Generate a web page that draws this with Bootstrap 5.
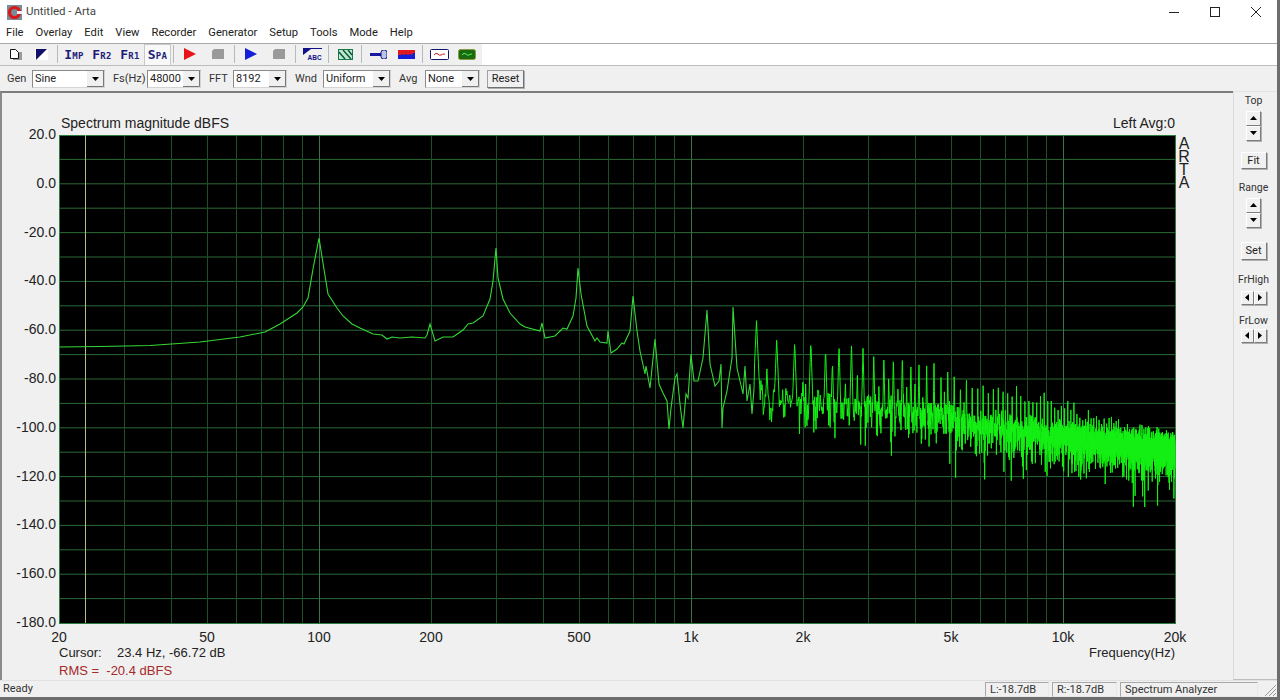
<!DOCTYPE html>
<html lang="en">
<head>
  <meta charset="UTF-8">
  <meta name="viewport" content="width=device-width, initial-scale=1.0">
  <title>Untitled - Arta</title>
  <link href="https://cdn.jsdelivr.net/npm/bootstrap@5.3.0/dist/css/bootstrap.min.css" rel="stylesheet">
  <style>
    html, body {
      height: 700px;
      overflow: hidden;
    }
    body {
      background-color: #6d6d6d;
      font-family: Roboto, "Noto Sans", sans-serif;
      font-size: 11px;
      color: #222;
    }
    .app-window {
      width: 1277px;
      height: 697px;
      background-color: #f0f0f0;
    }
    .title-row {
      height: 24px;
      background-color: #fff;
      padding-left: 7px;
      font-size: 11.5px;
      color: #444;
    }
    .win-btn {
      width: 41px;
      height: 24px;
    }
    .win-btns {
      margin-right: 1px;
    }
    .menu-row {
      height: 20px;
      background-color: #fff;
      font-size: 11.2px;
      padding-left: 6px;
      gap: 12px;
      border-bottom: 1px solid #a8a8a8;
    }
    .tool-row {
      height: 22px;
      background-color: #fff;
      border-bottom: 1px solid #bdbdbd;
    }
    .tool-strip {
      width: 482px;
      height: 21px;
      background-color: #f0f0f0;
      padding-left: 2px;
    }
    .tool-btn {
      width: 28px;
      height: 21px;
      flex: none;
    }
    .tool-btn.first {
      width: 26px;
    }
    .tool-btn.active {
      width: 27px;
      background-color: #f8f8f8;
      border: 1px solid #c8c8c8;
      border-bottom: 0;
    }
    .tool-sep {
      width: 1px;
      height: 18px;
      margin: 0 2px;
      background-color: #b9b9b9;
      flex: none;
    }
    .tool-sep.after-first {
      margin-left: 3px;
    }
    .tool-txt {
      font-family: "DejaVu Sans Mono", monospace;
      font-weight: 700;
      color: #1d1d78;
      font-size: 9px;
      letter-spacing: .3px;
      line-height: 1;
    }
    .tool-txt b {
      font-size: 13px;
    }
    .param-row {
      height: 25px;
      padding-left: 7px;
      padding-top: 1px;
      color: #333;
    }
    .param-label {
      flex: none;
    }
    select.form-select.win-combo {
      height: 18px;
      min-height: 0;
      padding: 0 0 0 2px;
      font-size: 11px;
      line-height: 15px;
      color: #222;
      border-radius: 0;
      border: 1px solid #8a8a8a;
      border-right-color: #d4d4d4;
      border-bottom-color: #d4d4d4;
      background-color: #fff;
      background-position: right center;
      background-size: 17px 16px;
      background-image: url("data:image/svg+xml,%3Csvg xmlns='http://www.w3.org/2000/svg' viewBox='0 0 17 16'%3E%3Crect width='17' height='16' fill='%23f0f0f0'/%3E%3Cpath d='M0 15.5h16.5V0' fill='none' stroke='%23777'/%3E%3Cpath d='M5 6h7l-3.500 4z' fill='%23000'/%3E%3C/svg%3E");
      flex: none;
    }
    .win-btn-face {
      padding: 0;
      font-size: 11px;
      line-height: 1;
      color: #222;
      background-color: #f0f0f0;
      border-radius: 0;
      border: 1px solid;
      border-color: #fff #7c7c7c #7c7c7c #fff;
      box-shadow: 1px 1px 0 #b0b0b0;
    }
    .reset-btn {
      width: 37px;
      height: 18px;
      margin-left: 7px;
      border-color: #a0a0a0 #707070 #707070 #a0a0a0;
    }
    .main-row {
      height: 590px;
      min-height: 0;
    }
    .plot-panel {
      width: 1233px;
      border-top: 2px solid #7d7d7d;
      border-left: 2px solid #8a8a8a;
    }
    .plot-panel svg {
      display: block;
    }
    .plot-panel text {
      font-family: "Liberation Sans", Arial, sans-serif;
      font-size: 14px;
      fill: #222;
    }
    .plot-panel text.info-txt {
      font-size: 13px;
    }
    .plot-panel text.rms-txt {
      font-size: 13px;
      fill: #a52a2a;
    }
    .plot-panel text.brand-txt {
      font-size: 16px;
      writing-mode: vertical-rl;
      text-orientation: upright;
      letter-spacing: -4.1px;
    }
    .side-panel {
      width: 44px;
      border-left: 1px solid #dcdcdc;
      border-top: 1px solid #e4e4e4;
      border-bottom: 1px solid #bdbdbd;
      color: #333;
      font-size: 10.5px;
      line-height: 12px;
      padding-top: 3px;
      padding-right: 4px;
    }
    .spin-v {
      width: 15px;
      height: 15px;
    }
    .spin-h {
      width: 13px;
      height: 14px;
    }
    .fit-btn {
      width: 26px;
      height: 17px;
    }
    .fit-gap { margin-top: 11px; }
    .range-gap { margin-top: 13px; }
    .set-gap { margin-top: 14px; height: 18px; }
    .fr-gap { margin-top: 14px; }
    .fr-gap2 { margin-top: 10px; }
    .fr-spin-high { margin-top: 5px; }
    .fr-spin-low { margin-top: 2px; }
    .status-row {
      height: 17px;
      padding-left: 3px;
      color: #333;
      border-top: 1px solid #e2e2e2;
    }
    .status-cell {
      height: 15px;
      padding-left: 4px;
      line-height: 14px;
      border: 1px solid;
      border-color: #a8a8a8 #e8e8e8 #e8e8e8 #a8a8a8;
      margin-left: 3px;
      flex: none;
    }
  </style>
</head>
<body>
  <div class="app-window d-flex flex-column">
    <!-- title bar -->
    <div class="title-row d-flex align-items-center">
      <svg width="15" height="15" viewBox="0 0 15 15" class="me-1">
        <rect width="15" height="15" fill="#7a8a96"/>
        <circle cx="7.500" cy="7.500" r="5" fill="none" stroke="#d81818" stroke-width="3.200"/>
        <rect x="10" y="6" width="5" height="3" fill="#eee"/>
      </svg>
      <span>Untitled - Arta</span>
      <div class="win-btns ms-auto d-flex">
        <div class="win-btn d-flex align-items-center justify-content-center">
          <svg width="10" height="10"><path d="M0 5.500h10" stroke="#222"/></svg>
        </div>
        <div class="win-btn d-flex align-items-center justify-content-center">
          <svg width="10" height="10"><rect x=".5" y=".5" width="9" height="9" fill="none" stroke="#222"/></svg>
        </div>
        <div class="win-btn d-flex align-items-center justify-content-center">
          <svg width="10" height="10"><path d="M0 0l10 10M10 0L0 10" stroke="#222"/></svg>
        </div>
      </div>
    </div>

    <!-- menu -->
    <div class="menu-row d-flex align-items-center">
      <span>File</span><span>Overlay</span><span>Edit</span><span>View</span><span>Recorder</span>
      <span>Generator</span><span>Setup</span><span>Tools</span><span>Mode</span><span>Help</span>
    </div>

    <!-- toolbar -->
    <div class="tool-row">
      <div class="tool-strip d-flex align-items-center">
        <div class="tool-btn first d-flex align-items-center justify-content-center">
          <svg width="13" height="13" viewBox="0 0 13 13"><rect x="4" y="4" width="9" height="8" fill="#999"/><path d="M1.500 1.500h5l3 3v6h-8z" fill="#fff" stroke="#111"/></svg>
        </div>
        <div class="tool-btn first d-flex align-items-center justify-content-center">
          <svg width="13" height="11" viewBox="0 0 13 11"><rect x="0" y="0" width="13" height="11" fill="#fff"/><path d="M1 0h11L1 11z" fill="#10106a"/></svg>
        </div>
        <div class="tool-sep after-first"></div>
        <div class="tool-btn d-flex align-items-center justify-content-center"><span class="tool-txt"><b>I</b>MP</span></div>
        <div class="tool-btn d-flex align-items-center justify-content-center"><span class="tool-txt"><b>F</b>R2</span></div>
        <div class="tool-btn d-flex align-items-center justify-content-center"><span class="tool-txt"><b>F</b>R1</span></div>
        <div class="tool-btn active d-flex align-items-center justify-content-center"><span class="tool-txt"><b>S</b>PA</span></div>
        <div class="tool-sep"></div>
        <div class="tool-btn d-flex align-items-center justify-content-center">
          <svg width="14" height="14"><path d="M1 1l12 6-12 6z" fill="#e8141c"/></svg>
        </div>
        <div class="tool-btn d-flex align-items-center justify-content-center">
          <svg width="12" height="12"><path d="M2 1h10v10H0V3z" fill="#9a9a9a"/></svg>
        </div>
        <div class="tool-sep"></div>
        <div class="tool-btn d-flex align-items-center justify-content-center">
          <svg width="14" height="14"><path d="M1 1l12 6-12 6z" fill="#1420d8"/></svg>
        </div>
        <div class="tool-btn d-flex align-items-center justify-content-center">
          <svg width="12" height="12"><path d="M2 1h10v10H0V3z" fill="#9a9a9a"/></svg>
        </div>
        <div class="tool-sep"></div>
        <div class="tool-btn d-flex align-items-center justify-content-center">
          <svg width="19" height="13" viewBox="0 0 19 13">
            <path d="M0 .5h19" stroke="#10108a"/><path d="M0 1h8L0 7z" fill="#10108a"/>
            <text x="4.500" y="11.500" font-family="Liberation Sans" font-size="6.500" font-weight="700" fill="#10108a">ABC</text>
          </svg>
        </div>
        <div class="tool-sep"></div>
        <div class="tool-btn d-flex align-items-center justify-content-center">
          <svg width="15" height="11" viewBox="0 0 15 11">
            <rect x=".5" y=".5" width="14" height="10" fill="#bfe8cf" stroke="#1a7a4a"/>
            <path d="M1 3l6 7M5 1l8 9M10 1l4 5" stroke="#0a5a3a" stroke-width="1.500"/>
          </svg>
        </div>
        <div class="tool-sep"></div>
        <div class="tool-btn d-flex align-items-center justify-content-center">
          <svg width="17" height="9" viewBox="0 0 17 9">
            <rect x="0" y="3" width="11" height="3" fill="#1818a0"/><rect x="11" y="0" width="6" height="9" rx="2.500" fill="#b8c4ec" stroke="#10106a"/>
          </svg>
        </div>
        <div class="tool-btn d-flex align-items-center justify-content-center">
          <svg width="17" height="9" viewBox="0 0 17 9">
            <rect width="17" height="9" fill="#1420d8"/>
            <path d="M0 0h17v3h-2l-1 2-2-1-2 1-2-1-2 1-2-1-1 1H0z" fill="#e01820"/>
          </svg>
        </div>
        <div class="tool-sep"></div>
        <div class="tool-btn d-flex align-items-center justify-content-center">
          <svg width="19" height="11" viewBox="0 0 19 11">
            <rect x=".5" y=".5" width="18" height="10" rx="1" fill="#fff" stroke="#14146e"/>
            <path d="M4 6q2-3 4-1t3 1 4-1" fill="none" stroke="#d81818"/>
          </svg>
        </div>
        <div class="tool-btn d-flex align-items-center justify-content-center">
          <svg width="18" height="11" viewBox="0 0 18 11">
            <rect x=".5" y=".5" width="17" height="10" rx="2" fill="#1a6a10" stroke="#8a9a40"/>
            <path d="M4 6q2-3 4-1t3 1 3-1" fill="none" stroke="#5cf05c"/>
          </svg>
        </div>
      </div>
    </div>

    <!-- generator and analyzer settings -->
    <div class="param-row d-flex align-items-center">
      <span class="param-label" style="width: 25px">Gen</span>
      <select class="form-select win-combo" style="width: 73px"><option>Sine</option></select>
      <span class="param-label ps-2" style="width: 42px">Fs(Hz)</span>
      <select class="form-select win-combo" style="width: 54px"><option>48000</option></select>
      <span class="param-label ps-2" style="width: 32px">FFT</span>
      <select class="form-select win-combo" style="width: 54px"><option>8192</option></select>
      <span class="param-label ps-2" style="width: 36px">Wnd</span>
      <select class="form-select win-combo" style="width: 68px"><option>Uniform</option></select>
      <span class="param-label ps-2" style="width: 34px">Avg</span>
      <select class="form-select win-combo" style="width: 55px"><option>None</option></select>
      <button type="button" class="btn win-btn-face reset-btn">Reset</button>
    </div>

    <div class="main-row d-flex">
      <!-- spectrum plot -->
      <div class="plot-panel">
        <svg id="plot" width="1231" height="588" viewBox="2 92 1231 588"></svg>
      </div>

      <!-- right side controls -->
      <div class="side-panel d-flex flex-column align-items-center">
        <span>Top</span>
        <div class="d-flex flex-column mt-1">
          <button type="button" class="btn win-btn-face spin-v d-flex align-items-center justify-content-center"><svg width="7" height="4"><path d="M3.500 0L7 4H0z"/></svg></button>
          <button type="button" class="btn win-btn-face spin-v d-flex align-items-center justify-content-center"><svg width="7" height="4"><path d="M0 0h7L3.500 4z"/></svg></button>
        </div>
        <button type="button" class="btn win-btn-face fit-btn fit-gap">Fit</button>
        <span class="range-gap">Range</span>
        <div class="d-flex flex-column mt-1">
          <button type="button" class="btn win-btn-face spin-v d-flex align-items-center justify-content-center"><svg width="7" height="4"><path d="M3.500 0L7 4H0z"/></svg></button>
          <button type="button" class="btn win-btn-face spin-v d-flex align-items-center justify-content-center"><svg width="7" height="4"><path d="M0 0h7L3.500 4z"/></svg></button>
        </div>
        <button type="button" class="btn win-btn-face fit-btn set-gap">Set</button>
        <span class="fr-gap">FrHigh</span>
        <div class="d-flex fr-spin-high">
          <button type="button" class="btn win-btn-face spin-h d-flex align-items-center justify-content-center"><svg width="4" height="7"><path d="M0 3.500L4 0v7z"/></svg></button>
          <button type="button" class="btn win-btn-face spin-h d-flex align-items-center justify-content-center"><svg width="4" height="7"><path d="M0 0l4 3.500L0 7z"/></svg></button>
        </div>
        <span class="fr-gap2">FrLow</span>
        <div class="d-flex fr-spin-low">
          <button type="button" class="btn win-btn-face spin-h d-flex align-items-center justify-content-center"><svg width="4" height="7"><path d="M0 3.500L4 0v7z"/></svg></button>
          <button type="button" class="btn win-btn-face spin-h d-flex align-items-center justify-content-center"><svg width="4" height="7"><path d="M0 0l4 3.500L0 7z"/></svg></button>
        </div>
      </div>
    </div>

    <!-- status bar -->
    <div class="status-row d-flex align-items-center">
      <span class="me-auto">Ready</span>
      <div class="status-cell" style="width: 64px">L:-18.7dB</div>
      <div class="status-cell" style="width: 65px">R:-18.7dB</div>
      <div class="status-cell" style="width: 138px">Spectrum Analyzer</div>
      <svg width="19" height="14" viewBox="0 0 19 14"><path d="M18 3L7 14M18 7l-7 7M18 11l-3 3" stroke="#999"/></svg>
    </div>
  </div>

  <script src="https://cdn.jsdelivr.net/npm/bootstrap@5.3.0/dist/js/bootstrap.bundle.min.js"></script>
  <script>
    const left = 59, right = 1175, top_ = 134, bottom = 622;
    const xOf = f => 691 + 372 * Math.log10(f / 1000);
    const svg = [];

    // grid
    svg.push(`<rect x="${left}" y="${top_}" width="${right - left}" height="${bottom - top_}" fill="#000"/>`);
    for (let i = 1; i < 20; i++) {
      const y = top_ + i * 24.4;
      svg.push(`<path d="M${left} ${y.toFixed(1)}H${right}" stroke="#2a6a36"/>`);
    }
    [10, 100, 1000, 10000].forEach(d => {
      for (let m = 1; m < 10; m++) {
        const f = d * m;
        if (f <= 20 || f >= 20000) continue;
        const x = Math.round(xOf(f)) + .5;
        const major = m === 1;
        svg.push(`<path d="M${x} ${top_}V${bottom}" stroke="${major ? '#37764a' : '#1d4f2a'}"/>`);
      }
    });
    svg.push(`<rect x="${left + .5}" y="${top_ + .5}" width="${right - left}" height="${bottom - top_}" fill="none" stroke="#2f7a3f"/>`);
    svg.push(`<path d="M85.500 ${top_}V${bottom}" stroke="#b9b98c"/>`);

    // low end of the curve, read off the reference by hand
    const handPts = [
      [59,346],[100,345.5],[150,344.5],[200,341],[240,336],[265,331],[280,323],[297,312],[303,306],[308,297],
      [313,268],[319,237],[323,262],[328,293],[337,307],[343,315],[352,323],[360,327],[373,333],[382,334],[387,338],
      [392,336],[400,337],[412,336],[425,337],[427,334],[430,323],[435,340],[443,336],[453,336],[463,329],
      [468,323],[473,322],[483,315],[490,298],[493,280],[496,247],[498,277],[503,298],[510,312],[520,323],
      [525,326],[540,330],[542,322],[545,337],[555,335],[563,327],[567,328],[573,315],[576,297],[578,267],
      [581,293],[587,325],[595,340],[597,337],[600,341],[607,342],[608,330],[611,352],[617,348],[622,342],
      [624,343],[630,330],[633,295],[637,330],[640,350],[645,373],[646,365],[650,387],[655,338],[659,383],
      [663,392],[667,400],[669,428],[671,407],[675,377],[677,373],[680,403],[683,427],[686,393],[688,397],
      [691,353],[694,380],[698,380],[703,357],[707,309],[710,363],[715,385],[719,380],[721,363],[722,427],
      [723,407],[727,390],[732,357],[733,306],[737,367],[743,393],[745,365],[747,400],[750,383],[752,413],
      [754,388]
    ];
    svg.push(`<polyline points="${handPts.map(p => p.join(',')).join(' ')}" fill="none" stroke="#35d835" stroke-width="1.1"/>`);

    // above 1.5 kHz: FFT bins of noise plus harmonics of 100 Hz
    let seed = 90210;
    const rnd = () => {
      seed = (seed * 1664525 + 1013904223) >>> 0;
      return seed / 4294967296;
    };
    const lerp = (tbl, x) => {
      for (let i = 1; i < tbl.length; i++) {
        if (x <= tbl[i][0]) {
          const t = (x - tbl[i - 1][0]) / (tbl[i][0] - tbl[i - 1][0]);
          return tbl[i - 1][1] + t * (tbl[i][1] - tbl[i - 1][1]);
        }
      }
      return tbl[tbl.length - 1][1];
    };
    const floorTbl = [[750,401],[850,413],[923,417],[973,430],[1057,440],[1123,448],[1180,455]];
    const peakTbl = [[750,312],[780,335],[850,338],[915,355],[975,375],[1040,388],[1075,398],[1130,415],[1180,428]];
    const binHz = 48000 / 8192;
    const peakY = {};
    for (let h = 15; h < 205; h++) {
      const x = xOf(h * 100);
      const base = lerp(peakTbl, x);
      peakY[h] = h % 2 ? base + rnd() * 14 : base + 22 + rnd() * 30;
    }
    let pts = [];
    for (let k = Math.round(1480 / binHz); k * binHz < 20000; k++) {
      const f = k * binHz;
      const x = xOf(f);
      const r = Math.sqrt(-2 * Math.log(1 - rnd() * .9999));
      let y = lerp(floorTbl, x) - 2.44 * 20 * Math.log10(r) * .9;
      const h = Math.round(f / 100);
      if (peakY[h]) {
        const dist = Math.abs(f - h * 100) / binHz;
        y = Math.min(y, peakY[h] + dist * 14);
      }
      pts.push(x.toFixed(2) + ',' + Math.min(y, 512).toFixed(1));
    }
    svg.push(`<polyline points="754,388 ${pts.join(' ')}" fill="none" stroke="#14f014" stroke-width="1"/>`);

    // axis labels
    for (let i = 0; i <= 10; i++) {
      const db = 20 - i * 20;
      svg.push(`<text x="56" y="${(138 + i * 48.8).toFixed(1)}" text-anchor="end">${db.toFixed(1)}</text>`);
    }
    [[20,'20'],[50,'50'],[100,'100'],[200,'200'],[500,'500'],[1000,'1k'],[2000,'2k'],[5000,'5k'],[10000,'10k'],[20000,'20k']].forEach(([f, label]) => {
      svg.push(`<text x="${xOf(f).toFixed(1)}" y="641" text-anchor="middle">${label}</text>`);
    });
    svg.push('<text x="61" y="127">Spectrum magnitude dBFS</text>');
    svg.push('<text x="1113" y="127">Left</text>');
    svg.push('<text x="1175" y="127" text-anchor="end">Avg:0</text>');
    svg.push('<text class="brand-txt" x="1184" y="134">ARTA</text>');
    svg.push('<text class="info-txt" x="59" y="656">Cursor:</text>');
    svg.push('<text class="info-txt" x="117" y="656">23.4 Hz, -66.72 dB</text>');
    svg.push('<text class="rms-txt" x="59" y="674" xml:space="preserve">RMS =  -20.4 dBFS</text>');
    svg.push('<text class="info-txt" x="1175" y="656" text-anchor="end">Frequency(Hz)</text>');

    document.getElementById('plot').innerHTML = svg.join('');
  </script>
</body>
</html>
